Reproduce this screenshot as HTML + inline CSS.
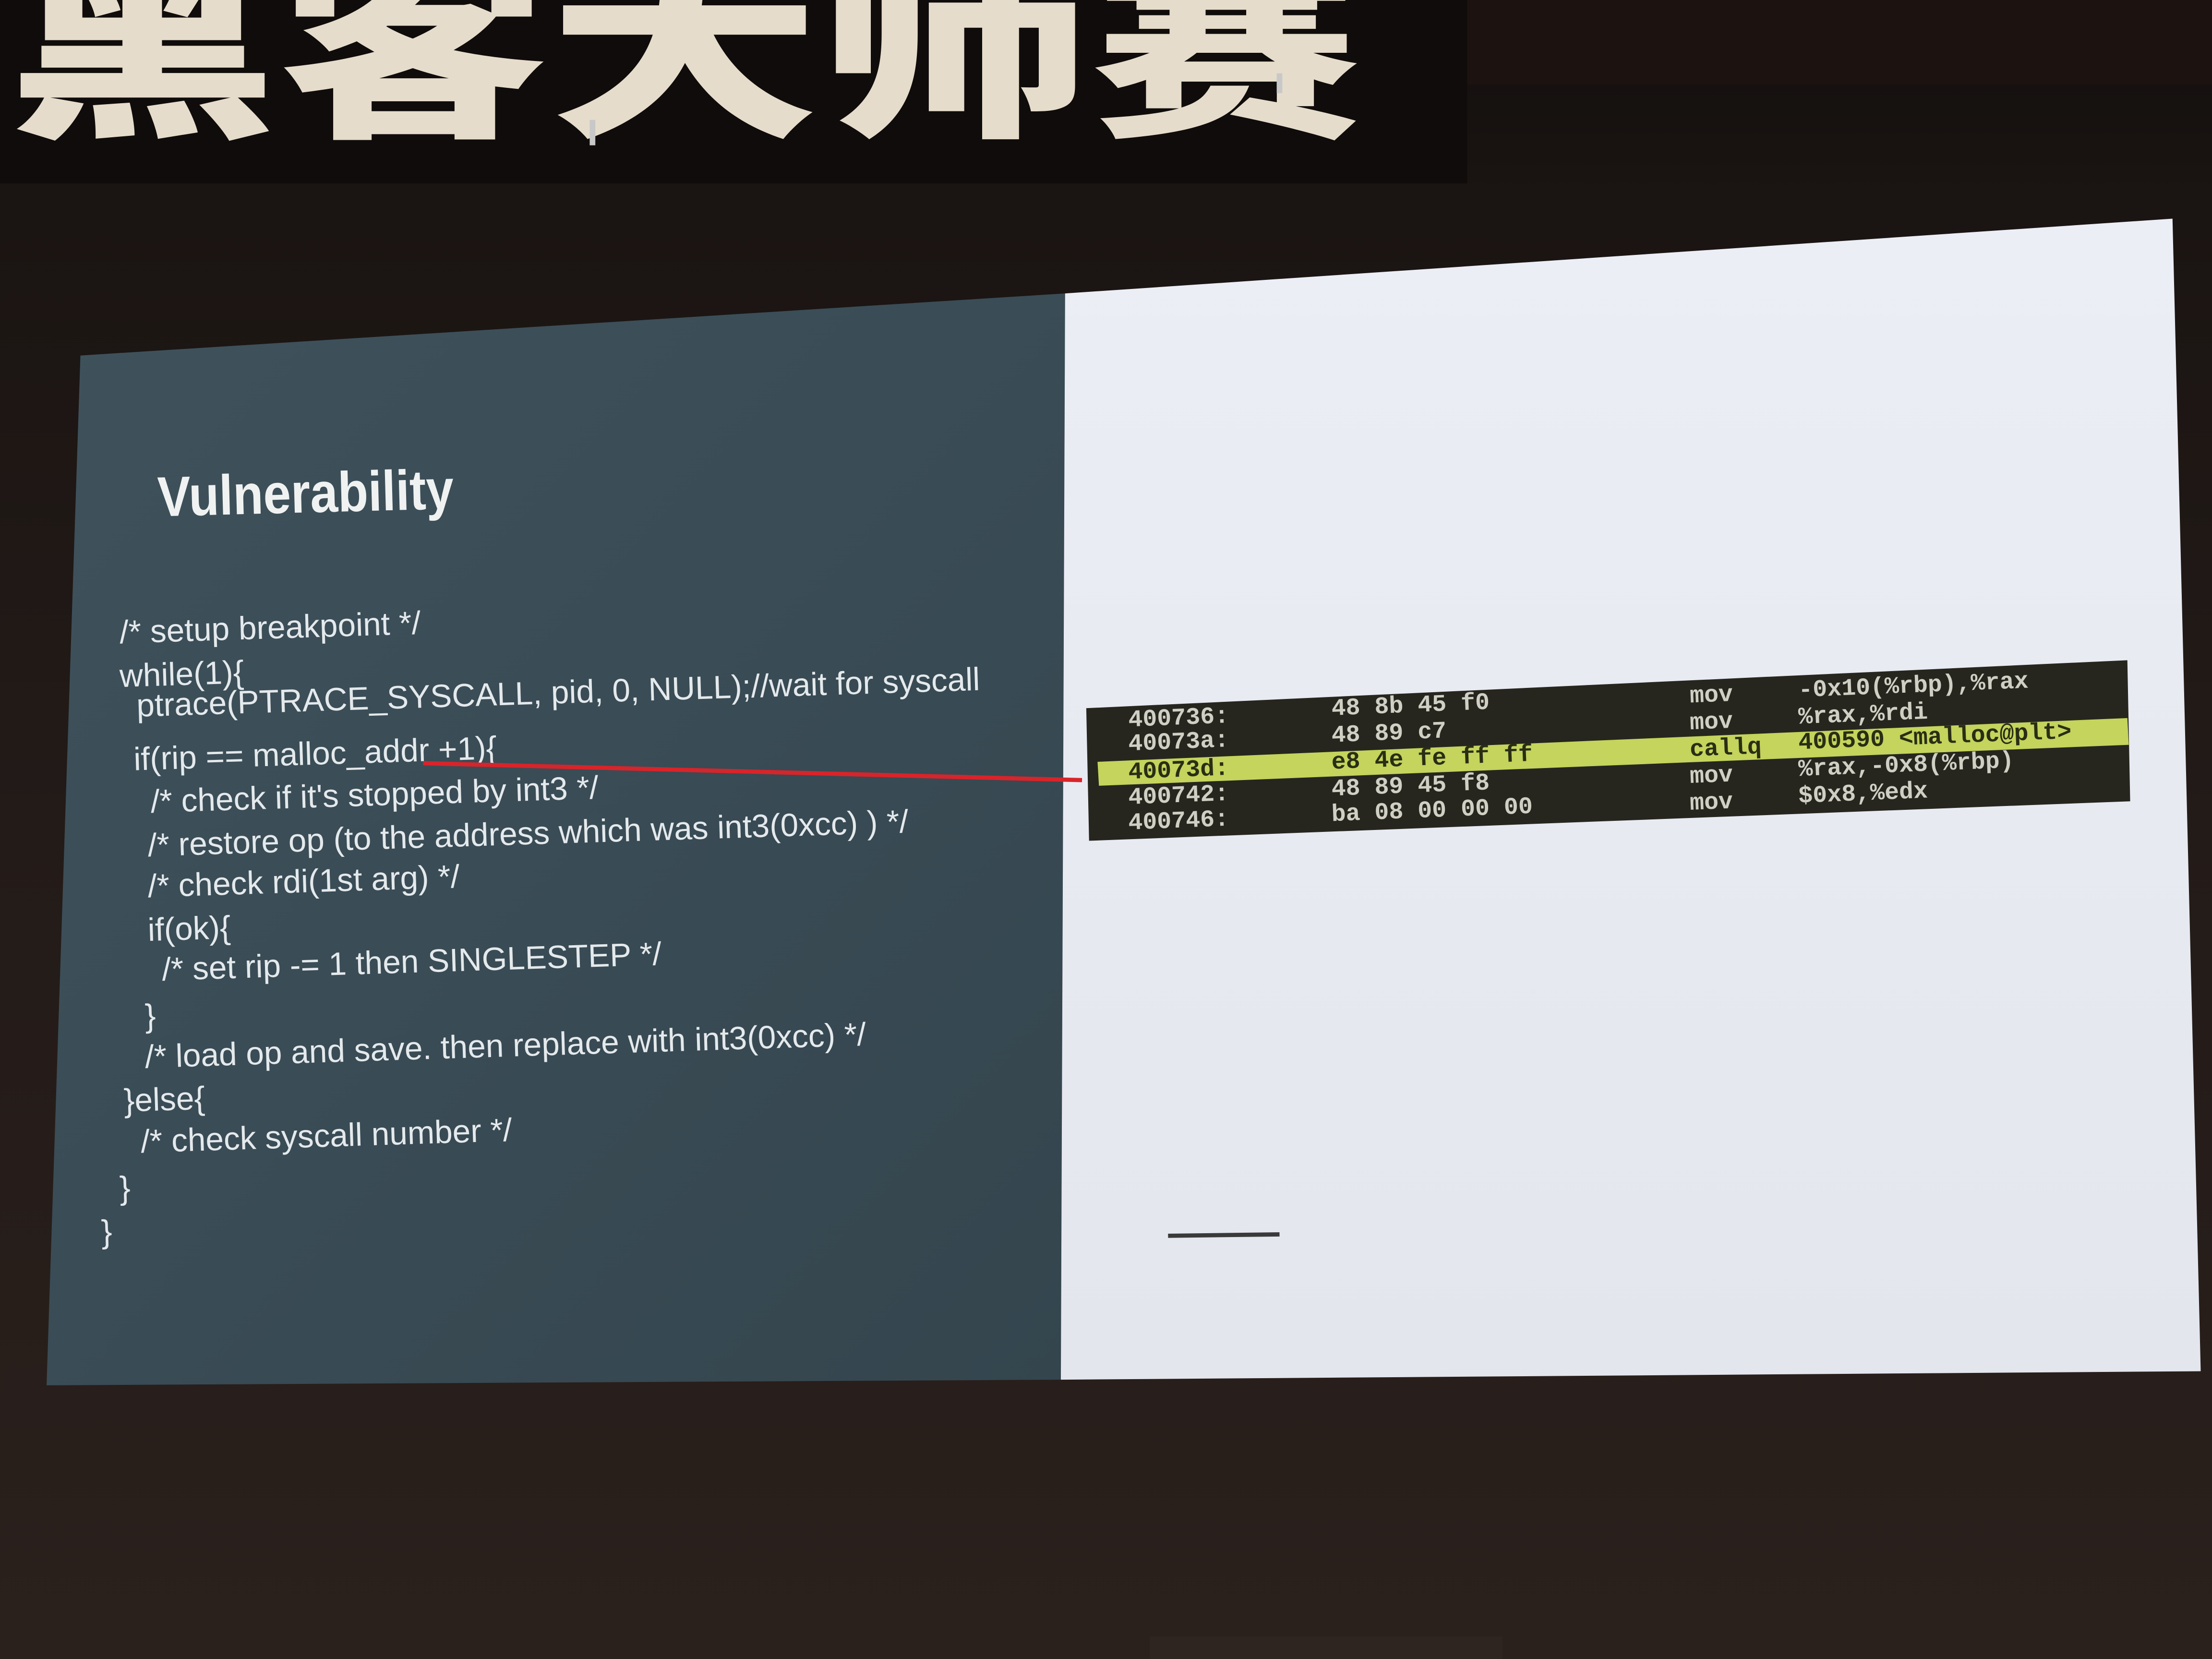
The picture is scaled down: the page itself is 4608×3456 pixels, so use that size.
<!DOCTYPE html>
<html><head><meta charset="utf-8">
<style>
html,body{margin:0;padding:0;background:#1f1815;width:4608px;height:3456px;overflow:hidden}
svg{display:block}
</style></head>
<body>
<svg width="4608" height="3456" viewBox="0 0 1568 1176" xmlns="http://www.w3.org/2000/svg">
<defs>
<linearGradient id="bg" x1="0" y1="0" x2="0" y2="1">
<stop offset="0" stop-color="#120f0e"/>
<stop offset="0.12" stop-color="#1a1412"/>
<stop offset="0.5" stop-color="#231b18"/>
<stop offset="1" stop-color="#2a201c"/>
</linearGradient>
<linearGradient id="lp" x1="0" y1="0" x2="1" y2="1">
<stop offset="0" stop-color="#3f525c"/>
<stop offset="1" stop-color="#34454e"/>
</linearGradient>
<linearGradient id="rp" x1="0" y1="0" x2="0" y2="1">
<stop offset="0" stop-color="#eceef6"/>
<stop offset="1" stop-color="#e4e6ee"/>
</linearGradient>
</defs>
<rect width="1568" height="1176" fill="url(#bg)"/>
<rect x="0" y="0" width="1040" height="130" fill="#0f0c0b"/>
<rect x="1040" y="0" width="528" height="60" fill="#1c1210"/>
<text x="5" y="86" font-family="'Noto Sans CJK SC','WenQuanYi Zen Hei',sans-serif" font-weight="900" font-size="138" fill="#e6dccb" textLength="960" lengthAdjust="spacingAndGlyphs">黑客大师赛</text>

<polygon points="57,252 755,208 752,978 33,982" fill="url(#lp)"/>
<polygon points="755,208 1540,155 1560,972 752,978" fill="url(#rp)"/>

<text x="112" y="366" font-family="'Liberation Sans',sans-serif" font-weight="bold" font-size="40" fill="#f0f2f2" textLength="210" lengthAdjust="spacingAndGlyphs" transform="rotate(-1.5 112 366)">Vulnerability</text>

<g font-family="'Liberation Sans',sans-serif" font-size="23" fill="#e4e9ec">
<text x="85" y="456" transform="rotate(-1.8 85 456)">/* setup breakpoint */</text>
<text x="85" y="487" transform="rotate(-1.8 85 487)">while(1){</text>
<text x="97" y="508" transform="rotate(-1.8 97 508)">ptrace(PTRACE_SYSCALL, pid, 0, NULL);//wait for syscall</text>
<text x="95" y="546" transform="rotate(-1.8 95 546)">if(rip == malloc_addr +1){</text>
<text x="107" y="576" transform="rotate(-1.8 107 576)">/* check if it's stopped by int3 */</text>
<text x="105" y="607" transform="rotate(-1.8 105 607)">/* restore op (to the address which was int3(0xcc) ) */</text>
<text x="105" y="636" transform="rotate(-1.8 105 636)">/* check rdi(1st arg) */</text>
<text x="105" y="667" transform="rotate(-1.8 105 667)">if(ok){</text>
<text x="115" y="695" transform="rotate(-1.8 115 695)">/* set rip -= 1 then SINGLESTEP */</text>
<text x="103" y="728" transform="rotate(-1.8 103 728)">}</text>
<text x="103" y="757" transform="rotate(-1.8 103 757)">/* load op and save. then replace with int3(0xcc) */</text>
<text x="88" y="788" transform="rotate(-1.8 88 788)">}else{</text>
<text x="100" y="817" transform="rotate(-1.8 100 817)">/* check syscall number */</text>
<text x="85" y="850" transform="rotate(-1.8 85 850)">}</text>
<text x="72" y="881" transform="rotate(-1.8 72 881)">}</text>
</g>

<polygon points="770,502 1508,468 1510,568 772,596" fill="#26261f"/>
<polygon points="778,540 1508,509 1509,528 779,557" fill="#c4d45c"/>
<g font-family="'Liberation Mono','DejaVu Sans Mono',monospace" font-size="17" font-weight="bold" fill="#cfcfc4">
<text x="800" y="515" transform="rotate(-2.3 800 515)">400736:</text>
<text x="944" y="507" transform="rotate(-2.3 944 507)">48 8b 45 f0</text>
<text x="1198" y="498" transform="rotate(-2.3 1198 498)">mov</text>
<text x="1275" y="494" transform="rotate(-2.3 1275 494)">-0x10(%rbp),%rax</text>
<text x="800" y="532" transform="rotate(-2.3 800 532)">40073a:</text>
<text x="944" y="526" transform="rotate(-2.3 944 526)">48 89 c7</text>
<text x="1198" y="517" transform="rotate(-2.3 1198 517)">mov</text>
<text x="1275" y="513" transform="rotate(-2.3 1275 513)">%rax,%rdi</text>
<g fill="#2a2e14">
<text x="800" y="552" transform="rotate(-2.3 800 552)">40073d:</text>
<text x="944" y="545" transform="rotate(-2.3 944 545)">e8 4e fe ff ff</text>
<text x="1198" y="536" transform="rotate(-2.3 1198 536)">callq</text>
<text x="1275" y="531" transform="rotate(-2.3 1275 531)">400590 &lt;malloc@plt&gt;</text>
</g>
<text x="800" y="570" transform="rotate(-2.3 800 570)">400742:</text>
<text x="944" y="564" transform="rotate(-2.3 944 564)">48 89 45 f8</text>
<text x="1198" y="555" transform="rotate(-2.3 1198 555)">mov</text>
<text x="1275" y="550" transform="rotate(-2.3 1275 550)">%rax,-0x8(%rbp)</text>
<text x="800" y="588" transform="rotate(-2.3 800 588)">400746:</text>
<text x="944" y="582" transform="rotate(-2.3 944 582)">ba 08 00 00 00</text>
<text x="1198" y="574" transform="rotate(-2.3 1198 574)">mov</text>
<text x="1275" y="569" transform="rotate(-2.3 1275 569)">$0x8,%edx</text>
</g>

<line x1="300" y1="541" x2="767" y2="553" stroke="#d8242a" stroke-width="3"/>
<line x1="828" y1="876" x2="907" y2="875" stroke="#3a3a3a" stroke-width="3"/>
<rect x="418" y="85" width="4" height="18" fill="#c8c8c8"/>
<rect x="905" y="52" width="4" height="14" fill="#c8c8c8"/>
<rect x="815" y="1160" width="250" height="16" fill="#2e2420"/>
</svg>
</body></html>
